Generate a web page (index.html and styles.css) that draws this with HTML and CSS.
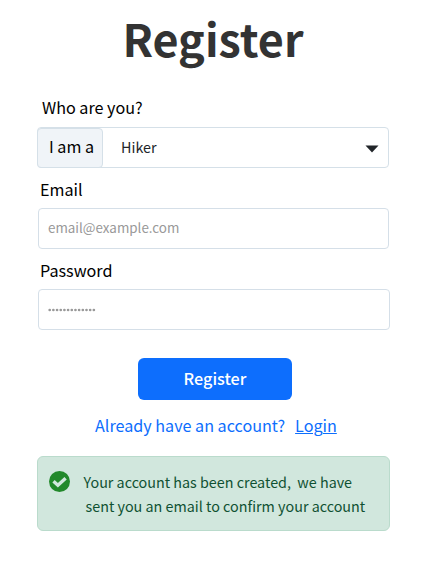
FILE: index.html
```
<!DOCTYPE html>
<html lang="en">
<head>
<meta charset="utf-8">
<title>Register</title>
<link rel="stylesheet" href="styles.css">
</head>
<body>
<main class="page">
  <h1 class="title"><span>Register</span></h1>
  <form class="form">
    <div class="label label-who"><span>Who are you?</span></div>
    <div class="select">
      <div class="prefix"><span>I am a</span></div>
      <div class="value"><span>Hiker</span></div>
      <svg class="caret" width="14" height="8" viewBox="0 0 14 8"><path d="M.5.5H13.5L7 7.5Z" fill="#212529"/></svg>
    </div>
    <div class="label label-email"><span>Email</span></div>
    <div class="field field-email"><span>email@example.com</span></div>
    <div class="label label-password"><span>Password</span></div>
    <div class="field field-password"><svg class="dots" width="50" height="4" viewBox="0 0 50 4"><path d="M1.7 2H46.5" fill="none" stroke="#999" stroke-width="2.7" stroke-linecap="round" stroke-dasharray="0 3.68"/></svg></div>
    <div class="button"><span>Register</span></div>
  </form>
  <div class="login"><span class="question">Already have an account?</span><a class="link">Login</a></div>
  <div class="alert">
    <svg class="check" width="21" height="21" viewBox="0 0 21 21"><circle cx="10.5" cy="10.5" r="10.5" fill="#22892b"/><path d="M4.5 10.2L8.9 14.2L16.6 7.2" fill="none" stroke="#d1e7dd" stroke-width="3.4"/></svg>
    <div class="message"><div class="line"><span>Your account has been created,&nbsp; we have</span></div><div class="line second"><span>sent you an email to confirm your account</span></div></div>
  </div>
</main>
</body>
</html>
```
FILE: styles.css
```
* { box-sizing: border-box; }
body {
  margin: 0;
  background: #fff;
  color: #000;
  font-family: "Noto Sans CJK JP", "Noto Sans", sans-serif;
  white-space: nowrap;
}
.page { width: 427px; height: 573px; padding: 12px 37px 0; overflow: hidden; }
.title { margin: 0 0 0 85.5px; height: 84px; font-size: 44.9px; line-height: 51px; font-weight: 700; color: #333; }
.label { height: 24px; font-size: 16.15px; line-height: 22px; }
.label-who { padding-left: 5px; height: 31px; }
.select { display: flex; align-items: center; width: 352px; height: 41px; border: 1px solid #d5e0e8; border-radius: 4px; }
.prefix { width: 66px; height: 40px; margin-left: -1px; padding-left: 11px; background: #f0f4f8; border: 1px solid #d5e0e8; border-radius: 4px; font-size: 16.15px; line-height: 35px; }
.value { padding-left: 18px; flex: 1; height: 39px; font-size: 14.35px; line-height: 37px; color: #212529; }
.caret { margin-right: 9px; margin-top: 2px; }
.label-email { margin: 10px 0 6px 3px; }
.field { display: flex; align-items: center; height: 41px; margin-left: 1px; padding-left: 9px; border: 1px solid #d5dfe8; border-radius: 4px; font-size: 13.4px; color: #999; }
.field-email { width: 351px; padding-bottom: 3px; }
.label-password { margin: 10px 0 6px 3px; }
.field-password { width: 352px; }
.dots { margin-top: 1px; }
.button { width: 154px; height: 42px; margin: 28px 0 0 101px; background: #0d6efd; border-radius: 6px; color: #fff; text-align: center; font-size: 16.2px; font-weight: 500; line-height: 40px; }
.login { display: flex; height: 56px; padding-left: 58px; padding-top: 12px; font-size: 16.15px; line-height: 26px; color: #0d6efd; }
.link { margin-left: 10px; text-decoration: underline; text-decoration-thickness: 1px; text-underline-offset: 1px; }
.alert { display: flex; width: 353px; height: 75px; padding: 13px 0 0 11px; background: #d1e7dd; border: 1px solid #badbcc; border-radius: 6px; color: #0f5132; }
.check { margin-top: 1px; }
.message { margin-left: 13.5px; font-size: 14.34px; line-height: 24px; }
.second { padding-left: 2px; }
```
